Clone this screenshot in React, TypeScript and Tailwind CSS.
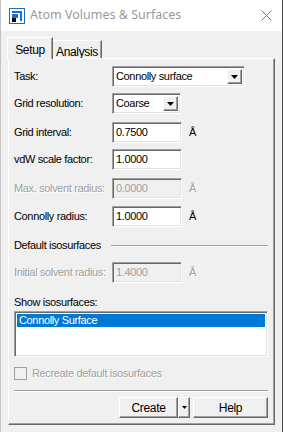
const font = { fontFamily: '"Liberation Sans", Arial, sans-serif' };

function Arrow() {
  return (
    <svg width="7" height="4" viewBox="0 0 7 4">
      <path d="M0 0h7L3.5 4z" fill="#000" />
    </svg>
  );
}

function DropButton() {
  return (
    <div className="w-[15px] h-full flex items-center justify-center bg-[#f0f0f0] border border-t-white border-l-white border-r-[#696969] border-b-[#696969] shadow-[inset_-1px_-1px_0_#a0a0a0]">
      <Arrow />
    </div>
  );
}

function Combo({ value, width }: { value: string; width: string }) {
  return (
    <div className={`${width} h-[21px] flex items-stretch bg-white border border-t-[#a0a0a0] border-l-[#a0a0a0] border-r-white border-b-white shadow-[inset_1px_1px_0_#696969,inset_-1px_-1px_0_#e3e3e3] p-[2px]`}>
      <div className="flex-1 pl-[1px] flex items-center text-black">{value}</div>
      <DropButton />
    </div>
  );
}

function Field({ label, value, disabled }: { label: string; value: string; disabled?: boolean }) {
  const grey = 'text-[#a0a0a0] [text-shadow:1px_1px_0_#fff]';
  return (
    <div className="flex items-center h-[21px]">
      <div className={`w-[98px] whitespace-nowrap ${disabled ? grey : 'text-black'}`}>{label}</div>
      <div
        className={`w-[70px] h-[21px] flex items-center pl-[3px] border border-t-[#a0a0a0] border-l-[#a0a0a0] border-r-white border-b-white shadow-[inset_1px_1px_0_#696969,inset_-1px_-1px_0_#e3e3e3] ${
          disabled ? 'bg-[#f0f0f0] text-[#a0a0a0]' : 'bg-white text-black'
        }`}
      >
        {value}
      </div>
      <div className={`ml-[7px] ${disabled ? grey : 'text-black'}`}>Å</div>
    </div>
  );
}

function AppIcon() {
  return (
    <svg width="16" height="16" viewBox="0 0 16 16">
      <rect x="0.5" y="0.5" width="15" height="15" fill="#fff" stroke="#1c6fc6" />
      <path d="M3 3h10v10h-2V5H3z" fill="#1c6fc6" />
      <path d="M3 6h6v4H3z" fill="#1c6fc6" />
      <rect x="3" y="10" width="4" height="4" fill="#000" />
    </svg>
  );
}

export default function App() {
  return (
    <div
      className="w-[283px] h-[432px] flex flex-col bg-[#f0f0f0] border-l border-l-[#c4c4c4] border-r border-r-[#4a4a4a] overflow-hidden text-[11px] tracking-[-0.35px]"
      style={font}
    >
      {/* title bar */}
      <div className="h-[31px] bg-white flex items-center pl-[8px] pr-[10px] shrink-0">
        <AppIcon />
        <div className="ml-[5px] flex-1 text-[12.5px] tracking-normal text-[#9a9a9a]" style={{ fontFamily: '"Noto Sans", "Open Sans", sans-serif' }}>
          Atom Volumes &amp; Surfaces
        </div>
        <svg width="11" height="11" viewBox="0 0 11 11">
          <path d="M0.5 0.5l10 10M10.5 0.5l-10 10" stroke="#7a7a7a" strokeWidth="1" />
        </svg>
      </div>

      {/* tabs */}
      <div className="flex items-end h-[21px] mt-[6px] ml-[6px] shrink-0">
        <div className="relative z-10 -mb-px w-[46px] h-[22px] bg-[#f0f0f0] border-t border-l border-t-white border-l-white border-r border-r-[#696969] shadow-[inset_-1px_0_0_#a0a0a0] flex items-start justify-center pt-[3px] text-[12px] text-black">
          Setup
        </div>
        <div className="w-[49px] h-[18px] bg-[#f0f0f0] border-t border-t-white border-r border-r-[#696969] shadow-[inset_-1px_0_0_#a0a0a0] flex items-start justify-center pt-[2px] text-[12px] text-black">
          Analysis
        </div>
      </div>

      {/* tab page */}
      <div className="ml-[7px] w-[267px] h-[367px] flex flex-col bg-[#f0f0f0] border-t border-l border-t-white border-l-white border-r border-b border-r-[#696969] border-b-[#696969] shadow-[inset_-1px_-1px_0_#a0a0a0] pl-[5px] pr-[6px]">
        <div className="flex items-center h-[21px] mt-[7px]">
          <div className="w-[98px]">Task:</div>
          <Combo value="Connolly surface" width="w-[133px]" />
        </div>
        <div className="flex items-center h-[21px] mt-[6px]">
          <div className="w-[98px]">Grid resolution:</div>
          <Combo value="Coarse" width="w-[69px]" />
        </div>
        <div className="mt-[8px]">
          <Field label="Grid interval:" value="0.7500" />
        </div>
        <div className="mt-[6px] flex items-center h-[21px]">
          <div className="w-[98px]">vdW scale factor:</div>
          <div className="w-[70px] h-[21px] flex items-center pl-[3px] bg-white border border-t-[#a0a0a0] border-l-[#a0a0a0] border-r-white border-b-white shadow-[inset_1px_1px_0_#696969,inset_-1px_-1px_0_#e3e3e3]">
            1.0000
          </div>
        </div>
        <div className="mt-[8px]">
          <Field label="Max. solvent radius:" value="0.0000" disabled />
        </div>
        <div className="mt-[7px]">
          <Field label="Connolly radius:" value="1.0000" />
        </div>

        <div className="mt-[12px] h-[13px] flex items-center">
          <div className="w-[97px] whitespace-nowrap">Default isosurfaces</div>
          <div className="flex-1 h-[2px] border-t border-t-[#a0a0a0] border-b border-b-white" />
        </div>

        <div className="mt-[10px]">
          <Field label="Initial solvent radius:" value="1.4000" disabled />
        </div>

        <div className="mt-[13px] h-[13px] flex items-center">Show isosurfaces:</div>

        <div className="mt-[2px] h-[46px] bg-white border border-t-[#a0a0a0] border-l-[#a0a0a0] border-r-white border-b-white shadow-[inset_1px_1px_0_#696969,inset_-1px_-1px_0_#e3e3e3] p-[2px]">
          <div className="h-[13px] bg-[#0078d7] text-white flex items-center pl-[2px]">Connolly Surface</div>
        </div>

        <div className="mt-[10px] h-[13px] flex items-center">
          <div className="w-[13px] h-[13px] border border-[#a0a0a0] bg-[#f0f0f0]" />
          <div className="ml-[5px] text-[#a0a0a0] [text-shadow:1px_1px_0_#fff]">Recreate default isosurfaces</div>
        </div>

        <div className="mt-[10px] h-[2px] border-t border-t-[#a0a0a0] border-b border-b-white" />

        <div className="mt-[5px] h-[21px] flex justify-end">
          <div className="w-[59px] h-full flex items-center justify-center bg-[#f0f0f0] border border-t-white border-l-white border-r-[#696969] border-b-[#696969] shadow-[inset_-1px_-1px_0_#a0a0a0] text-black text-[12px]">
            Create
          </div>
          <div className="w-[12px] h-full flex items-center justify-center bg-[#f0f0f0] border border-t-white border-l-white border-r-[#696969] border-b-[#696969] shadow-[inset_-1px_-1px_0_#a0a0a0]">
            <svg width="5" height="3" viewBox="0 0 5 3">
              <path d="M0 0h5L2.5 3z" fill="#000" />
            </svg>
          </div>
          <div className="ml-[3px] w-[75px] h-full flex items-center justify-center bg-[#f0f0f0] border border-t-white border-l-white border-r-[#696969] border-b-[#696969] shadow-[inset_-1px_-1px_0_#a0a0a0] text-black text-[12px]">
            Help
          </div>
        </div>
      </div>
    </div>
  );
}
